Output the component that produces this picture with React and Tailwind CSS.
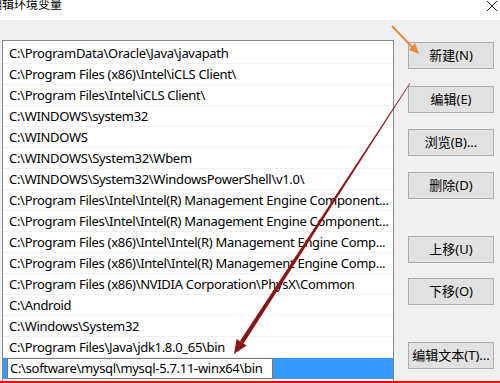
import React from 'react';

const paths = [
  'C:\\ProgramData\\Oracle\\Java\\javapath',
  'C:\\Program Files (x86)\\Intel\\iCLS Client\\',
  'C:\\Program Files\\Intel\\iCLS Client\\',
  'C:\\WINDOWS\\system32',
  'C:\\WINDOWS',
  'C:\\WINDOWS\\System32\\Wbem',
  'C:\\WINDOWS\\System32\\WindowsPowerShell\\v1.0\\',
  'C:\\Program Files\\Intel\\Intel(R) Management Engine Component...',
  'C:\\Program Files\\Intel\\Intel(R) Management Engine Component...',
  'C:\\Program Files (x86)\\Intel\\Intel(R) Management Engine Comp...',
  'C:\\Program Files (x86)\\Intel\\Intel(R) Management Engine Comp...',
  'C:\\Program Files (x86)\\NVIDIA Corporation\\PhysX\\Common',
  'C:\\Android',
  'C:\\Windows\\System32',
  'C:\\Program Files\\Java\\jdk1.8.0_65\\bin',
];

const buttons = [
  { label: '新建(N)', mt: 'mt-0' },
  { label: '编辑(E)', mt: 'mt-[17px]' },
  { label: '浏览(B)...', mt: 'mt-[16px]' },
  { label: '删除(D)', mt: 'mt-[16px]' },
  { label: '上移(U)', mt: 'mt-[37px]' },
  { label: '下移(O)', mt: 'mt-[15px]' },
  { label: '编辑文本(T)...', mt: 'mt-[37px]' },
];

export default function App() {
  return (
    <div
      className="relative w-[500px] h-[383px] overflow-hidden bg-[#f0f0f0] text-[13px] text-black"
      style={{ fontFamily: '"Noto Sans", "Noto Sans CJK SC", sans-serif' }}
    >
      {/* title bar */}
      <div className="h-[20px] bg-white flex items-start justify-between">
        <span className="ml-[-10px] mt-[-3px] text-[12px] leading-[16px]">编辑环境变量</span>
        <svg width="12" height="12" viewBox="0 0 12 12" className="mr-[2px]">
          <path d="M1 1 L11 11 M11 1 L1 11" stroke="#222" strokeWidth="1" />
        </svg>
      </div>

      <div className="flex items-start">
        {/* path list */}
        <div className="ml-[2px] mt-[20px] w-[392px] h-[400px] border border-[#828790] bg-white pt-[2px] tracking-[-0.3px]">
          {paths.map((p, i) => (
            <div
              key={i}
              className="h-[21px] border-b border-[#f0f0f0] pl-[6px] leading-[20px] whitespace-nowrap overflow-hidden"
            >
              {p}
            </div>
          ))}
          <div className="h-[21px] bg-[#3399ff] flex">
            <div className="ml-[4px] w-[266px] h-[21px] border border-[#7a7a7a] bg-white pl-[2px] leading-[19px] whitespace-nowrap overflow-hidden">
              C:\software\mysql\mysql-5.7.11-winx64\bin
            </div>
          </div>
        </div>

        {/* buttons */}
        <div className="ml-[14px] mt-[22px] flex flex-col">
          {buttons.map((b) => (
            <div
              key={b.label}
              className={`${b.mt} w-[86px] h-[27px] border border-[#adadad] bg-[#e1e1e1] flex items-center justify-center`}
            >
              {b.label}
            </div>
          ))}
        </div>
      </div>

      {/* red bottom line */}
      <div className="absolute left-0 right-0 top-[381px] h-[2px] bg-[#ff0000]" />

      {/* annotation arrows */}
      <svg className="absolute inset-0 pointer-events-none" width="500" height="383">
        <line x1="392" y1="26" x2="412" y2="47" stroke="#f0883a" strokeWidth="2" />
        <polygon points="419,54 409,50 415,43" fill="#f0883a" />
        <polygon points="409.7,83 410.3,83.3 243.6,343.5 240,341" fill="#8b1414" />
        <polygon points="234,354 236.6,339 246.6,345.6" fill="#8b1414" />
      </svg>
    </div>
  );
}
